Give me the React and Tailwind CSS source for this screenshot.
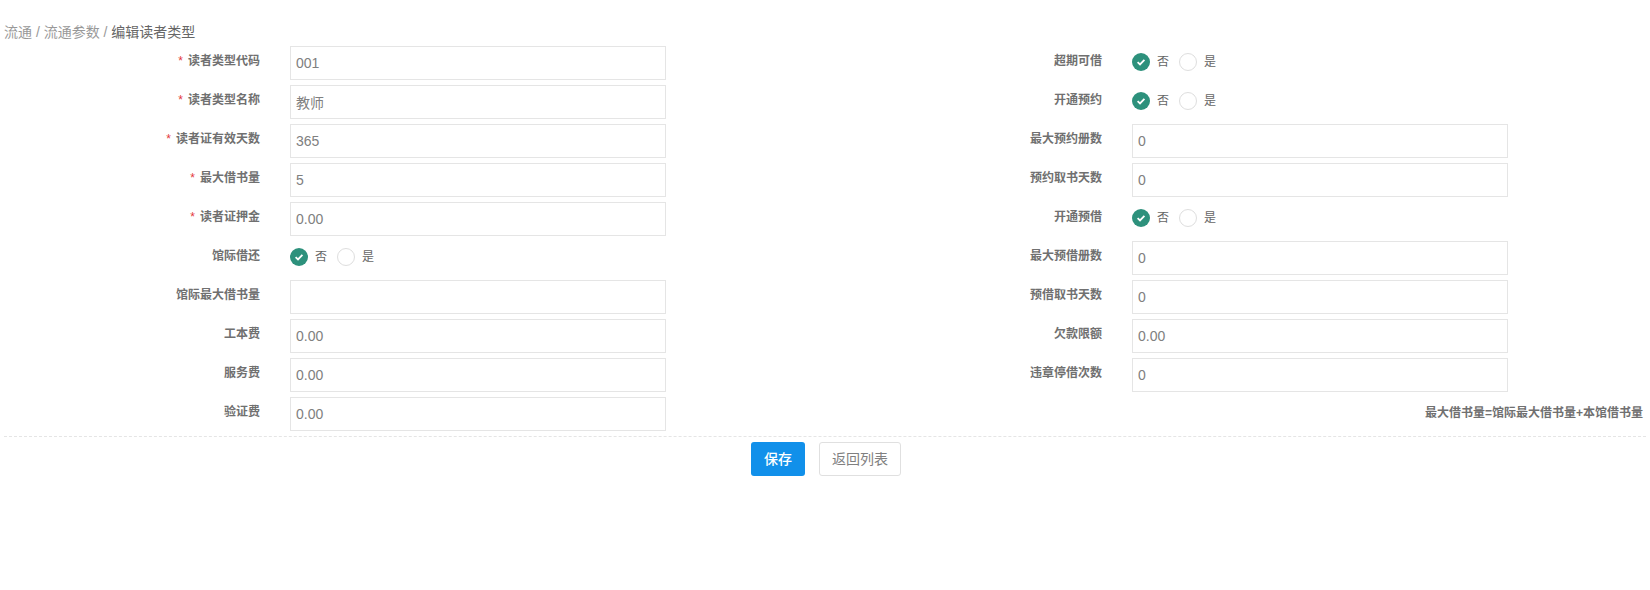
const FONT = "font-['Liberation_Sans','Noto_Sans_CJK_SC',sans-serif]";

const LEFT_ROWS = [
  { label: "读者类型代码", value: "001", required: true },
  { label: "读者类型名称", value: "教师", required: true },
  { label: "读者证有效天数", value: "365", required: true },
  { label: "最大借书量", value: "5", required: true },
  { label: "读者证押金", value: "0.00", required: true },
  { label: "馆际借还", radio: true },
  { label: "馆际最大借书量", value: "" },
  { label: "工本费", value: "0.00" },
  { label: "服务费", value: "0.00" },
  { label: "验证费", value: "0.00" },
];

const RIGHT_ROWS = [
  { label: "超期可借", radio: true },
  { label: "开通预约", radio: true },
  { label: "最大预约册数", value: "0" },
  { label: "预约取书天数", value: "0" },
  { label: "开通预借", radio: true },
  { label: "最大预借册数", value: "0" },
  { label: "预借取书天数", value: "0" },
  { label: "欠款限额", value: "0.00" },
  { label: "违章停借次数", value: "0" },
];

function RadioPair() {
  return (
    <div className="flex h-[34px] items-center pb-[2px] text-xs text-[#666]">
      <span className="flex h-[18px] w-[18px] items-center justify-center rounded-full bg-[#2d917c]">
        <svg width="12" height="12" viewBox="0 0 12 12" fill="none">
          <path d="M2.6 6.2 L5 8.4 L9.4 3.8" stroke="#fff" strokeWidth="1.8" />
        </svg>
      </span>
      <span className="ml-[7px]">否</span>
      <span className="ml-[10px] h-[18px] w-[18px] rounded-full border border-[#dedede] bg-white" />
      <span className="ml-[7px]">是</span>
    </div>
  );
}

function FormRow({ row, labelWidth }) {
  return (
    <div className="flex h-[34px] gap-[30px]">
      <label
        style={{ width: labelWidth }}
        className="pt-[6px] text-right text-xs leading-[18px] font-bold text-[#707070]"
      >
        {row.required && <span className="mr-[5px] font-normal text-[#e4393c]">*</span>}
        {row.label}
      </label>
      {row.radio ? (
        <RadioPair />
      ) : (
        <input
          readOnly
          value={row.value}
          className="h-[34px] w-[376px] border border-[#e5e5e5] bg-white px-[5px] text-sm text-[#808080] outline-none"
        />
      )}
    </div>
  );
}

export default function App() {
  return (
    <div className={`${FONT} h-[590px] bg-white px-1 pt-[23px]`}>
      <div className="text-sm leading-[18px] text-[#999]">
        流通 / 流通参数 / <span className="text-[#666]">编辑读者类型</span>
      </div>

      <div className="mt-[5px] flex justify-between border-b border-dashed border-[#e5e5e5] pb-[5px]">
        <div className="flex flex-col gap-[5px]">
          {LEFT_ROWS.map((row) => (
            <FormRow key={row.label} row={row} labelWidth={256} />
          ))}
        </div>
        <div className="flex flex-col gap-[5px]">
          {RIGHT_ROWS.map((row) => (
            <div key={row.label} className="mr-[138px]">
              <FormRow row={row} labelWidth={200} />
            </div>
          ))}
          <div className="flex h-[34px] items-center justify-end pr-[3px] pb-[3px] text-xs font-bold text-[#707070]">
            最大借书量=馆际最大借书量+本馆借书量
          </div>
        </div>
      </div>

      <div className="mt-[5px] flex justify-center gap-[14px] pl-[2px]">
        <button className="h-[34px] w-[54px] rounded-[3px] bg-[#1190ea] text-sm font-medium text-white">
          保存
        </button>
        <button className="h-[34px] w-[82px] rounded-[3px] border border-[#e0e0e0] bg-white text-sm text-[#808080]">
          返回列表
        </button>
      </div>
    </div>
  );
}
